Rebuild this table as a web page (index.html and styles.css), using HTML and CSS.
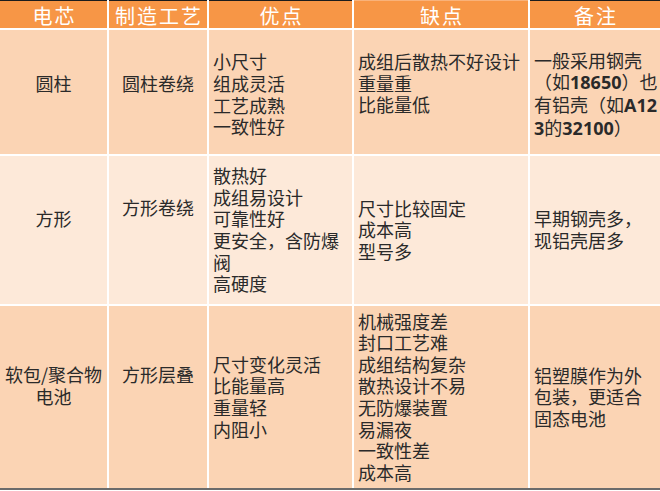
FILE: index.html
```html
<!DOCTYPE html>
<html lang="zh">
<head>
<meta charset="utf-8">
<link rel="stylesheet" href="styles.css">
</head>
<body>
<div class="table">
  <div class="cell head c1"><div class="txt">电芯</div></div>
  <div class="cell head c2"><div class="txt">制造工艺</div></div>
  <div class="cell head c3"><div class="txt">优点</div></div>
  <div class="cell head c4 notop"><div class="txt">缺点</div></div>
  <div class="cell head c5"><div class="txt">备注</div></div>

  <div class="cell odd r1 center pb1"><div class="txt">圆柱</div></div>
  <div class="cell odd r1 center pb1"><div class="txt">圆柱卷绕</div></div>
  <div class="cell odd r1 left"><div class="txt">小尺寸<br>组成灵活<br>工艺成熟<br>一致性好</div></div>
  <div class="cell odd r1 left pb1"><div class="txt">成组后散热不好设计<br>重量重<br>比能量低</div></div>
  <div class="cell odd r1 left"><div class="txt">一般采用钢壳<br>（如<b>18650</b>）也<br>有铝壳（如<b>A12</b><br><b>3</b>的<b>32100</b>）</div></div>

  <div class="cell even center pb1"><div class="txt">方形</div></div>
  <div class="cell even center pb2"><div class="txt">方形卷绕</div></div>
  <div class="cell even left"><div class="txt">散热好<br>成组易设计<br>可靠性好<br>更安全，含防爆<br>阀<br>高硬度</div></div>
  <div class="cell even left"><div class="txt">尺寸比较固定<br>成本高<br>型号多</div></div>
  <div class="cell even left"><div class="txt">早期钢壳多，<br>现铝壳居多</div></div>

  <div class="cell odd center pb1"><div class="txt">软包/聚合物<br>电池</div></div>
  <div class="cell odd center pb2"><div class="txt">方形层叠</div></div>
  <div class="cell odd left"><div class="txt">尺寸变化灵活<br>比能量高<br>重量轻<br>内阻小</div></div>
  <div class="cell odd left"><div class="txt">机械强度差<br>封口工艺难<br>成组结构复杂<br>散热设计不易<br>无防爆装置<br>易漏夜<br>一致性差<br>成本高</div></div>
  <div class="cell odd left"><div class="txt">铝塑膜作为外<br>包装，更适合<br>固态电池</div></div>
</div>
</body>
</html>
```

FILE: styles.css
```css
html, body {
  margin: 0;
  padding: 0;
  background: #ffffff;
}

body {
  width: 660px;
  height: 491px;
  overflow: hidden;
  font-family: "Noto Sans CJK SC", "Noto Sans", sans-serif;
}

.table {
  display: grid;
  grid-template-columns: 107px 98px 143px 174px 130px;
  grid-template-rows: 28px 124px 148px 182px;
  column-gap: 2px;
  row-gap: 2px;
  background: #ffffff;
  border-bottom: 2px solid #6b6b6b;
  width: 660px;
}

.cell {
  display: flex;
  flex-direction: column;
  justify-content: center;
  font-size: 18px;
  line-height: 21.6px;
  color: #2a2a2a;
  white-space: nowrap;
  box-sizing: border-box;
}

.cell b {
  font-family: "Open Sans", "Noto Sans", sans-serif;
  font-weight: 700;
  font-size: 18px;
}

.head {
  background: #f79646;
  color: #ffffff;
  font-size: 20px;
  letter-spacing: 2px;
  align-items: center;
  text-align: center;
  border-top: 1px solid #1c1c1c;
  line-height: 26px;
  padding-left: 2px;
  padding-top: 2px;
}

.head.notop {
  border-top-color: #f9b27a;
}

.odd {
  background: #fbd4b4;
}

.even {
  background: #fde9d9;
}

.r1 {
  padding-top: 5px;
}

.center {
  align-items: center;
  text-align: center;
}

.left {
  align-items: flex-start;
  text-align: left;
  padding-left: 4px;
}

.pb1 {
  padding-bottom: 22px;
}

.pb2 {
  padding-bottom: 44px;
}

.r1.pb1 {
  padding-bottom: 22px;
}
```
